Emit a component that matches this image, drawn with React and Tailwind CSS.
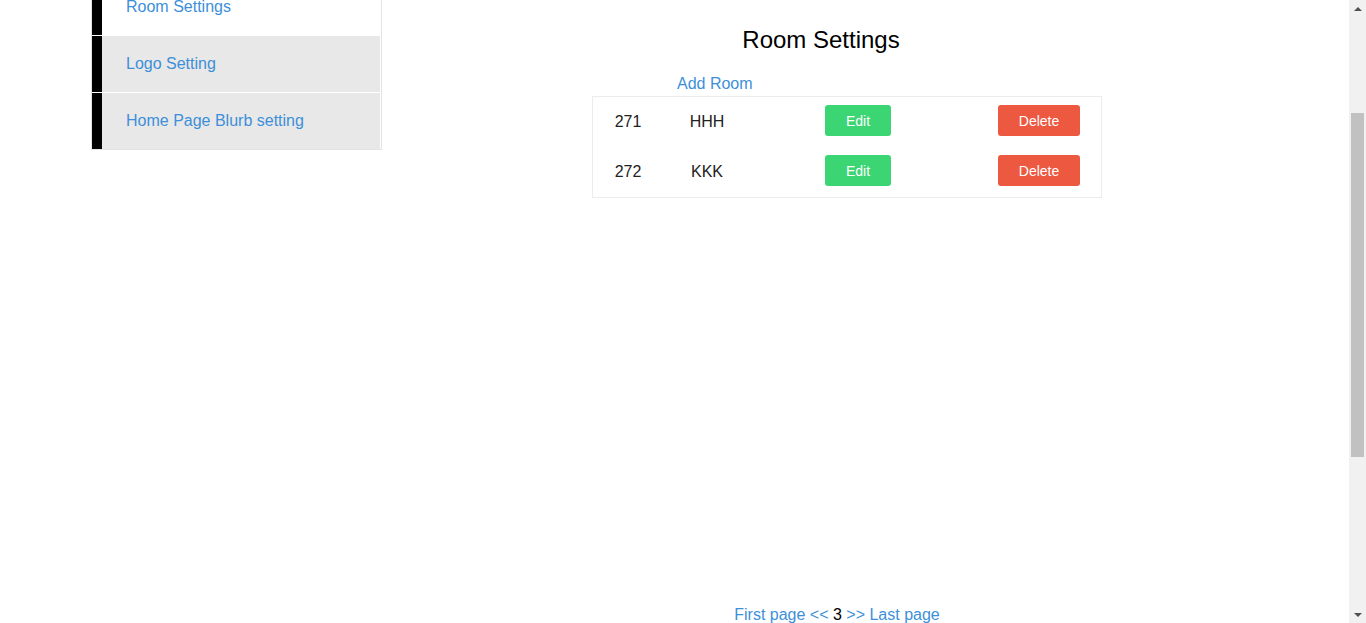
import React from 'react';

const menu = [
    { label: 'Room Settings', active: true },
    { label: 'Logo Setting' },
    { label: 'Home Page Blurb setting' },
];

const rooms = [
    { id: 271, name: 'HHH' },
    { id: 272, name: 'KKK' },
];

const Sidebar = () => (
    <div className="ml-[91px] -mt-[22px] w-[291px] self-start border border-[#e3e3e3] pr-px">
        {menu.map((item, i) => (
            <div
                key={item.label}
                className={
                    'flex h-[56px] items-center border-l-[10px] border-black pl-6 text-base text-[#3d8fd9] ' +
                    (i < menu.length - 1 ? 'mb-px ' : '') +
                    (item.active ? 'bg-white' : 'bg-[#e8e8e8]')
                }
            >
                {item.label}
            </div>
        ))}
    </div>
);

const RoomRow = ({ room }) => (
    <div className="flex h-[50px] items-center text-base text-[#222]">
        <div className="w-[70px] text-center">{room.id}</div>
        <div className="w-[88px] text-center">{room.name}</div>
        <div className="flex w-[214px] justify-center">
            <button className="mb-[3px] h-[31px] w-[66px] rounded-[3px] bg-[#3bd573] text-sm text-white">Edit</button>
        </div>
        <div className="flex w-[136px] pl-[33px]">
            <button className="mb-[3px] h-[31px] w-[82px] rounded-[3px] bg-[#ec5840] text-sm text-white">Delete</button>
        </div>
    </div>
);

const Scrollbar = () => (
    <div className="flex h-full w-[17px] shrink-0 flex-col items-center bg-[#f1f1f1]">
        <div className="flex h-[17px] items-center justify-center">
            <div className="h-0 w-0 border-x-[4px] border-b-[4px] border-x-transparent border-b-[#505050]" />
        </div>
        <div className="mt-[96px] h-[344px] w-[13px] bg-[#c1c1c1]" />
        <div className="flex-1" />
        <div className="flex h-[17px] items-center justify-center">
            <div className="h-0 w-0 border-x-[4px] border-t-[4px] border-x-transparent border-t-[#505050]" />
        </div>
    </div>
);

export default function App() {
    return (
        <div className="flex h-[623px] w-full overflow-hidden bg-white font-['Liberation_Sans',Arial,sans-serif]">
            <div className="flex min-w-0 flex-1">
                <Sidebar />

                {/* Main column */}
                <div className="ml-[210px] flex w-[510px] flex-col">
                    <h1 className="mt-[26px] w-[458px] text-center text-2xl leading-[28px] text-black">Room Settings</h1>
                    <a className="ml-[85px] mt-[21px] text-base leading-[18px] text-[#3d8fd9]">Add Room</a>
                    <div className="mt-[3px] border border-[#ececec]">
                        {rooms.map((room) => (
                            <RoomRow key={room.id} room={room} />
                        ))}
                    </div>
                    <div className="-mb-px mt-auto w-[490px] text-center text-base leading-[18px] text-[#3d8fd9]">
                        First page &lt;&lt; <span className="text-black">3</span> &gt;&gt; Last page
                    </div>
                </div>
            </div>
            <Scrollbar />
        </div>
    );
}
